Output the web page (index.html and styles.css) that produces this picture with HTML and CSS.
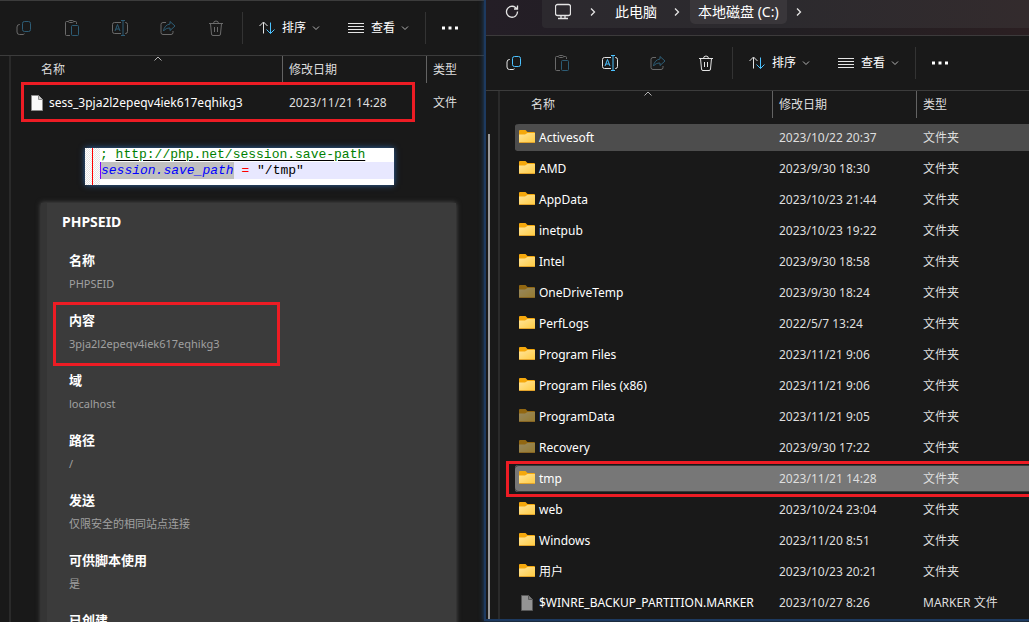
FILE: index.html
```html
<!DOCTYPE html>
<html lang="zh-CN">
<head>
<meta charset="utf-8">
<title>本地磁盘 (C:)</title>
<link rel="stylesheet" href="styles.css">
</head>
<body>
<svg class="sprite" aria-hidden="true">
  <symbol id="copy" viewBox="0 0 16 16">
    <path class="line" d="M4 4.500H3.500a2.500 2.500 0 0 0-2.500 2.500v5a2.500 2.500 0 0 0 2.500 2.500H7a2.500 2.500 0 0 0 1.500-.8"/>
    <rect class="accent" x="6.500" y="1.500" width="8" height="10" rx="2"/>
  </symbol>
  <symbol id="paste" viewBox="0 0 16 16">
    <path class="line" d="M4 1.500H2.500a1 1 0 0 0-1 1v12a1 1 0 0 0 1 1H6M10 1.500h1.500a1 1 0 0 1 1 1V4"/>
    <rect class="line" x="4.500" y=".5" width="5" height="2" rx="1"/>
    <rect class="accent" x="7.500" y="5.500" width="7" height="10" rx="1"/>
  </symbol>
  <symbol id="rename" viewBox="0 0 16 16">
    <path class="line" d="M9 2.500H2.500a2 2 0 0 0-2 2v7a2 2 0 0 0 2 2H9M13 2.500h.5a2 2 0 0 1 2 2v7a2 2 0 0 1-2 2H13"/>
    <path class="accent" d="M3 11l2.500-6.500L8 11M4 9h3M11 .5v15M9 .5h4M9 15.500h4"/>
  </symbol>
  <symbol id="share" viewBox="0 0 16 16">
    <path class="line" d="M6 2.500H3a2 2 0 0 0-2 2v8a2 2 0 0 0 2 2h8a2 2 0 0 0 2-2V11"/>
    <path class="accent" d="M10 1.500l5 4.500-5 4.500V8C7 8 5 9 3.500 11 4 7 6.500 4.500 10 4z"/>
  </symbol>
  <symbol id="trash" viewBox="0 0 16 16">
    <path class="line" d="M1 3.500h14M5.500 3.500a2.500 2.500 0 0 1 5 0M2.500 3.500l1 10.500a1.500 1.500 0 0 0 1.500 1.500h6a1.500 1.500 0 0 0 1.500-1.500l1-10.500M6.500 7v5M9.500 7v5"/>
  </symbol>
  <symbol id="sort" viewBox="0 0 16 16">
    <path class="line" d="M4.500 13.500v-11M.5 6l4-4 4 4"/>
    <path class="accent" d="M11.500 2.500v11M7.500 9.500l4 4 4-4"/>
  </symbol>
  <symbol id="view" viewBox="0 0 16 16">
    <path class="line" d="M0 3.500h16M0 6.500h16M0 9.500h16M0 12.500h16"/>
  </symbol>
  <symbol id="down" viewBox="0 0 8 8"><path class="soft" d="M1 2.500l3 3 3-3"/></symbol>
  <symbol id="up" viewBox="0 0 8 5"><path class="soft" d="M.5 4.500L4 1l3.500 3.500"/></symbol>
  <symbol id="next" viewBox="0 0 8 8"><path class="bold" d="M2 .5L5.500 4 2 7.500"/></symbol>
  <symbol id="more" viewBox="0 0 16 16"><path class="fill" d="M0 6.500h3v3H0zM6.500 6.500h3v3h-3zM13 6.500h3v3h-3z"/></symbol>
  <symbol id="refresh" viewBox="0 0 16 16"><path class="bold" d="M13.500 7.500a5.500 5.500 0 1 1-2-4L13.500 5M13.500 1.500V5H10"/></symbol>
  <symbol id="pc" viewBox="0 0 16 16"><path class="bold" d="M2.500.5h11a2 2 0 0 1 2 2v7a2 2 0 0 1-2 2h-11a2 2 0 0 1-2-2v-7a2 2 0 0 1 2-2zM6 11.500v3M10 11.500v3M3 14.500h10"/></symbol>
  <symbol id="folder" viewBox="0 0 16 16">
    <path fill="#f5a80c" d="M0 1Q0 0 1 0h5.500L8.500 2H15q1 0 1 1v9H0z"/>
    <path fill="url(#paper)" d="M0 4.500h6L8.500 3H16v9q0 1-1 1H1q-1 0-1-1z"/>
    <path fill="#e2a32c" d="M0 12h16q0 1-1 1H1q-1 0-1-1z"/>
  </symbol>
  <symbol id="file" viewBox="0 0 16 16">
    <path class="sheet" d="M2.500.5h7l4 4v11h-11z"/><path class="fold" d="M9.500.5v4h4"/>
  </symbol>
  <linearGradient id="paper" x1="0" y1="0" x2="1" y2="1"><stop stop-color="#ffe49a"/><stop offset="1" stop-color="#ffcb40"/></linearGradient>
</svg>

<main class="desktop">
  <section class="window back" aria-label="会话文件">
    <div class="toolbar">
      <button class="tool off" aria-label="复制"><svg><use href="#copy"/></svg></button>
      <button class="tool off" aria-label="粘贴"><svg><use href="#paste"/></svg></button>
      <button class="tool off" aria-label="重命名"><svg><use href="#rename"/></svg></button>
      <button class="tool off" aria-label="共享"><svg><use href="#share"/></svg></button>
      <button class="tool off" aria-label="删除"><svg><use href="#trash"/></svg></button>
      <span class="divider"></span>
      <button class="menu"><svg><use href="#sort"/></svg>排序<svg class="mini"><use href="#down"/></svg></button>
      <button class="menu"><svg><use href="#view"/></svg>查看<svg class="mini"><use href="#down"/></svg></button>
      <span class="divider last"></span>
      <button class="tool" aria-label="更多"><svg><use href="#more"/></svg></button>
    </div>
    <div class="body">
      <div class="nav"></div>
      <div class="content">
        <table class="files">
          <colgroup><col class="c-name"><col class="c-date"><col></colgroup>
          <thead><tr><th><span>名称</span><svg class="caret"><use href="#up"/></svg></th><th><span>修改日期</span></th><th><span>类型</span></th></tr></thead>
          <tbody>
            <tr class="boxed"><td><div class="name"><svg><use href="#file"/></svg>sess_3pja2l2epeqv4iek617eqhikg3</div></td><td>2023/11/21 14:28</td><td>文件</td></tr>
          </tbody>
        </table>

        <div class="snippet">
          <div class="gutter"></div>
          <div class="code">
            <div class="comment">; <a href="http://php.net/session.save-path">http://php.net/session.save-path</a></div>
            <div class="current"><i>session.save_path</i> <b>=</b> "/tmp"</div>
          </div>
        </div>

        <div class="cookie">
          <h2>PHPSEID</h2>
          <dl>
            <div><dt>名称</dt><dd>PHPSEID</dd></div>
            <div class="marked"><dt>内容</dt><dd>3pja2l2epeqv4iek617eqhikg3</dd></div>
            <div><dt>域</dt><dd>localhost</dd></div>
            <div><dt>路径</dt><dd>/</dd></div>
            <div><dt>发送</dt><dd>仅限安全的相同站点连接</dd></div>
            <div><dt>可供脚本使用</dt><dd>是</dd></div>
            <div><dt>已创建</dt></div>
          </dl>
        </div>
      </div>
    </div>
  </section>

  <section class="window front" aria-label="本地磁盘 (C:)">
    <div class="titlebar">
      <button class="refresh" aria-label="刷新"><svg><use href="#refresh"/></svg></button>
      <nav class="address">
        <svg><use href="#pc"/></svg>
        <svg class="mini"><use href="#next"/></svg>
        <button class="crumb">此电脑</button>
        <svg class="mini"><use href="#next"/></svg>
        <button class="crumb here">本地磁盘 (C:)</button>
        <svg class="mini"><use href="#next"/></svg>
      </nav>
    </div>
    <div class="toolbar">
      <button class="tool" aria-label="复制"><svg><use href="#copy"/></svg></button>
      <button class="tool off" aria-label="粘贴"><svg><use href="#paste"/></svg></button>
      <button class="tool" aria-label="重命名"><svg><use href="#rename"/></svg></button>
      <button class="tool off" aria-label="共享"><svg><use href="#share"/></svg></button>
      <button class="tool" aria-label="删除"><svg><use href="#trash"/></svg></button>
      <span class="divider"></span>
      <button class="menu"><svg><use href="#sort"/></svg>排序<svg class="mini"><use href="#down"/></svg></button>
      <button class="menu"><svg><use href="#view"/></svg>查看<svg class="mini"><use href="#down"/></svg></button>
      <span class="divider last"></span>
      <button class="tool" aria-label="更多"><svg><use href="#more"/></svg></button>
    </div>
    <div class="body">
      <div class="nav"><div class="scroll"></div></div>
      <div class="content">
        <table class="files">
          <colgroup><col class="c-name"><col class="c-date"><col></colgroup>
          <thead><tr><th><span>名称</span><svg class="caret"><use href="#up"/></svg></th><th><span>修改日期</span></th><th><span>类型</span></th></tr></thead>
          <tbody>
            <tr class="hover"><td><div class="name"><svg><use href="#folder"/></svg>Activesoft</div></td><td>2023/10/22 20:37</td><td>文件夹</td></tr>
            <tr><td><div class="name"><svg><use href="#folder"/></svg>AMD</div></td><td>2023/9/30 18:30</td><td>文件夹</td></tr>
            <tr><td><div class="name"><svg><use href="#folder"/></svg>AppData</div></td><td>2023/10/23 21:44</td><td>文件夹</td></tr>
            <tr><td><div class="name"><svg><use href="#folder"/></svg>inetpub</div></td><td>2023/10/23 19:22</td><td>文件夹</td></tr>
            <tr><td><div class="name"><svg><use href="#folder"/></svg>Intel</div></td><td>2023/9/30 18:58</td><td>文件夹</td></tr>
            <tr class="hidden"><td><div class="name"><svg><use href="#folder"/></svg>OneDriveTemp</div></td><td>2023/9/30 18:24</td><td>文件夹</td></tr>
            <tr><td><div class="name"><svg><use href="#folder"/></svg>PerfLogs</div></td><td>2022/5/7 13:24</td><td>文件夹</td></tr>
            <tr><td><div class="name"><svg><use href="#folder"/></svg>Program Files</div></td><td>2023/11/21 9:06</td><td>文件夹</td></tr>
            <tr><td><div class="name"><svg><use href="#folder"/></svg>Program Files (x86)</div></td><td>2023/11/21 9:06</td><td>文件夹</td></tr>
            <tr class="hidden"><td><div class="name"><svg><use href="#folder"/></svg>ProgramData</div></td><td>2023/11/21 9:05</td><td>文件夹</td></tr>
            <tr class="hidden"><td><div class="name"><svg><use href="#folder"/></svg>Recovery</div></td><td>2023/9/30 17:22</td><td>文件夹</td></tr>
            <tr class="selected boxed"><td><div class="name"><svg><use href="#folder"/></svg>tmp</div></td><td>2023/11/21 14:28</td><td>文件夹</td></tr>
            <tr><td><div class="name"><svg><use href="#folder"/></svg>web</div></td><td>2023/10/24 23:04</td><td>文件夹</td></tr>
            <tr><td><div class="name"><svg><use href="#folder"/></svg>Windows</div></td><td>2023/11/20 8:51</td><td>文件夹</td></tr>
            <tr><td><div class="name"><svg><use href="#folder"/></svg>用户</div></td><td>2023/10/23 20:21</td><td>文件夹</td></tr>
            <tr class="hidden"><td><div class="name"><svg><use href="#file"/></svg>$WINRE_BACKUP_PARTITION.MARKER</div></td><td>2023/10/27 8:26</td><td>MARKER 文件</td></tr>
          </tbody>
        </table>
      </div>
    </div>
  </section>
</main>
</body>
</html>
```
FILE: styles.css
```css
*, *::before, *::after { box-sizing: border-box; }

body {
  margin: 0;
  background: #191919;
  color: #fff;
  font: 12px/18px "Noto Sans", "Noto Sans CJK SC", sans-serif;
}

button {
  display: flex;
  align-items: center;
  margin: 0;
  padding: 0;
  border: 0;
  background: none;
  color: inherit;
  font: inherit;
}

svg { flex: none; width: 16px; height: 16px; }
.sprite { position: absolute; width: 0; height: 0; }
.mini { width: 8px; height: 8px; }

.line, .accent, .soft, .bold { fill: none; stroke: #e4e4e4; }
.accent { stroke: #4cc2ff; }
.soft { stroke: #b4b4b4; }
.bold { stroke-width: 1.3; }
.fill { fill: #fff; }
.sheet { fill: #fafafa; stroke: #8c8c8c; }
.fold { fill: #ccc; stroke: #8c8c8c; }

.desktop {
  display: grid;
  grid-template-columns: minmax(0, 484fr) minmax(0, 545fr);
  height: 100vh;
  overflow: hidden;
}

.window { display: flex; flex-direction: column; min-height: 0; background: #191919; }
.back { border-top: 1px solid #3c3c3c; overflow: hidden; }
.front {
  position: relative;
  margin-bottom: 1px;
  border: solid #1d3a60;
  border-width: 0 0 2px 2px;
  box-shadow: 0 0 5px #1f4674;
}

.titlebar {
  display: flex;
  flex: none;
  align-items: flex-start;
  height: 36px;
  border-bottom: 1px solid #3c3a3b;
  background: linear-gradient(90deg, #241e26, #201e22 50%, #2b1f22);
  font-size: 14px;
}
.refresh { justify-content: center; width: 52px; height: 24px; margin-right: 4px; }
.address {
  display: flex;
  flex: 1;
  align-items: flex-start;
  height: 28px;
  padding-left: 13px;
  border-radius: 0 0 0 4px;
  background: linear-gradient(90deg, #2c292e, #2c2a2e 50%, #332b2d);
}
.address > svg { height: 24px; }
.address > svg:first-child { margin-right: 18px; }
.crumb { height: 24px; padding: 0 8px; margin: 0 8px 0 10px; border-radius: 0 0 5px 5px; }
.crumb.here { margin-left: 9px; background: #39363a; }

.toolbar {
  display: flex;
  flex: none;
  align-items: center;
  height: 55px;
  border-bottom: 1px solid #3c3c3c;
}
.front .toolbar { padding-left: 4px; }
.tool { justify-content: center; width: 48px; height: 32px; }
.tool.off svg { opacity: .4; }
.divider { width: 1px; height: 32px; margin-left: 2px; background: #333; }
.divider.last { margin-left: 4px; }
.menu { gap: 7px; width: 89px; height: 32px; padding-left: 16px; }
.menu .mini { margin-left: -1px; }

.body { display: flex; flex: 1; min-height: 0; }
.nav { flex: none; width: 11px; border-right: 2px solid #2a2a2a; }
.front .nav { width: 14px; padding: 43px 0 0 2px; }
.scroll { width: 2px; height: 100%; background: #9a9a9a; }
.content { flex: 1; min-width: 0; padding-left: 14px; }
.front .content { margin-left: -9px; padding-left: 24px; overflow: hidden; }

.files { width: 100%; table-layout: fixed; border-spacing: 0; }
.c-name { width: 257px; }
.c-date { width: 144px; }
.files th { position: relative; height: 31px; padding: 0; font-weight: 400; text-align: left; vertical-align: top; color: #dedede; }
.files th span { display: block; height: 27px; padding-left: 6px; border-left: 1px solid #636363; line-height: 27px; }
.files th:first-child span { padding-left: 15px; border-color: transparent; }
.caret { position: absolute; top: 0; left: 129px; width: 8px; height: 5px; }
.files td {
  height: 31px;
  padding: 0 0 0 7px;
  border: solid transparent;
  border-width: 2px 0;
  background-clip: padding-box;
  color: #dedede;
  white-space: nowrap;
}
.files td:first-child { padding-left: 4px; border-radius: 4px 0 0 4px; color: #fff; }
.name { display: flex; align-items: center; gap: 4px; }
.hover td { background-color: #4d4d4d; }
.selected td { background-color: #777; box-shadow: inset 0 1px #3a3a3a, inset 0 -1px #3a3a3a; }
.hidden svg { opacity: .55; }

.boxed { position: relative; }
.boxed td:first-child::after {
  content: "";
  position: absolute;
  inset: -5px 69px -4px -4px;
  border: 3px solid #ed1c24;
}
.front .nav { position: relative; }
.front .boxed td:first-child::after { inset: -2px -4px -3px -9px; }

.snippet {
  display: flex;
  width: 309px;
  max-width: 80%;
  height: 37px;
  margin: 30px 0 0 60px;
  background: #fff;
  box-shadow: 0 0 6px #2c64a4;
  color: #000;
  font: 13px/17px "Liberation Mono", monospace;
}
.gutter {
  width: 15px;
  background:
    linear-gradient(#f00, #f00) 7px 0 / 1px 100% no-repeat,
    repeating-conic-gradient(#e4e4e4 0 25%, #fff 0 50%) 0 0 / 2px 2px;
}
.code { flex: 1; white-space: nowrap; }
.comment { height: 14px; line-height: 14px; color: #008000; }
.comment a { color: inherit; text-decoration-color: #000; text-underline-offset: 2px; }
.current { height: 17px; border-left: 1px solid #8000ff; background: #e8e8ff; }
.current i { display: inline-block; background: #c0c0c0; color: #00f; }
.current b { color: #f00; font-weight: 400; }

.cookie {
  height: 480px;
  margin: 18px 28px 0 16px;
  padding: 7px 15px;
  border-left: 6px solid #353535;
  background: #3b3b3b;
  box-shadow: 0 0 5px #585858;
}
.cookie h2 { margin: 0 0 14px; font-size: 14px; line-height: 24px; }
.cookie dl { margin: 0 0 0 7px; line-height: 24px; }
.cookie dl > div { position: relative; margin-bottom: 12px; }
.cookie dt { font-size: 13px; font-weight: 700; }
.cookie dd { margin: 0; color: #a0a0a0; font-size: 11px; }
.marked::after {
  content: "";
  position: absolute;
  inset: -6px auto -10px -16px;
  width: 227px;
  border: 3px solid #ed1c24;
}
.marked + div { z-index: 0; }
```
